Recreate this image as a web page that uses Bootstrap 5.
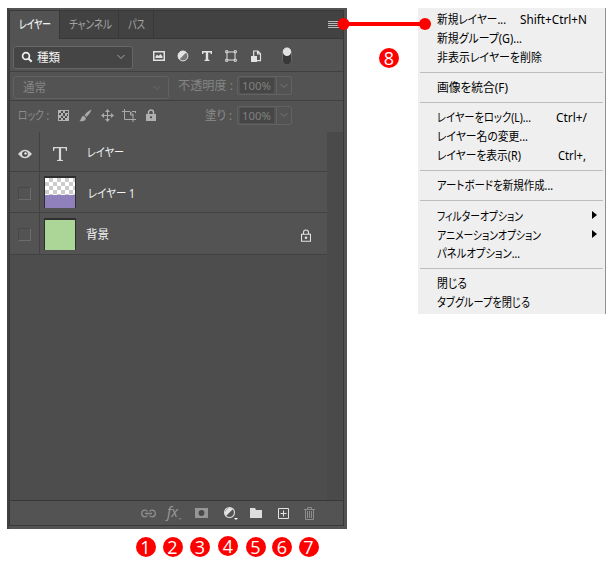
<!DOCTYPE html>
<html lang="ja">
<head>
<meta charset="utf-8">
<title>レイヤーパネル</title>
<link rel="stylesheet" href="https://cdn.jsdelivr.net/npm/bootstrap@5.3.0/dist/css/bootstrap.min.css">
<style>
body{width:613px;height:567px;overflow:hidden;background:#fff;font-family:"Noto Sans","Noto Sans CJK JP",sans-serif;font-size:12px;line-height:18px}
.t{display:inline-block;white-space:nowrap;font-feature-settings:"palt";transform-origin:0 50%;flex:none}
svg{display:block;flex:none}
.stage{padding:8px 7px 0}
.panel{width:340px;height:521px;background:#535353;border-left:2px solid #404040;padding:2px 3px 3px 0}
.inner{height:516px;border:1px solid #383838}
.tabs{height:28px;background:#424242;border-bottom:1px solid #383838;color:#a2a2a2}
.tabx{border-right:1px solid #383838;height:27px;padding-left:9px}
.tabx.on{background:#535353;color:#f0f0f0;height:28px;width:50px;font-weight:500}
.tw2{width:59px}.tw3{width:35px}
.bar1{height:33px;border-bottom:1px solid #404040;padding-left:3px}
.bar2{height:29px;border-bottom:1px solid #404040;padding-left:3px;padding-bottom:1px;color:#858585}
.bar3{height:31px;padding-left:8px;padding-bottom:3px;color:#8c8c8c}
.pick{height:23px;border:1px solid #666;border-radius:3px;padding:0 7px}
.kind{width:120px;background:#454545;color:#f4f4f4;margin-top:4px}
.kind .t{margin-top:2px}
.blend{width:156px;border-color:#616161;padding-left:9px}
.num{width:55px;height:19px;border:1px solid #626262;border-radius:2px;color:#808080}
.num .val{width:34px;height:15px;margin-left:2px;background:#464646;padding-left:2px;font-size:11px;line-height:15px}
.num .arr{width:15px;border-left:1px solid #626262;margin-left:auto}
.cell24{width:24px}.cell22{width:22px}
.filters{margin:2px 0 0 14px}
.toggle{margin-left:15px}
.lab2{width:59px;margin-left:9px}
.lab3{width:32px;margin-left:43px}
.lab3 .t,.lock-label{margin-top:1px}
.locks{margin-left:3px}
.list{height:368px;background:#4d4d4d}
.rows{width:317px}
.layer{background:#535353;border-bottom:1px solid #424242;height:41px;color:#f4f4f4}
.layer.h1x{height:40px}.layer.h3x{height:42px}
.vis{width:30px;border-right:1px solid #424242}
.eyebox{width:13px;height:13px;margin-top:2px;border:1px solid #484848;border-right-color:#6c6c6c;border-bottom-color:#6c6c6c}
.thumb{width:32px;height:32px;border:1px solid #2f2f2f;border-top-width:2px;border-bottom:0;margin-left:4px}
.glyph{margin:4px 0 0 13px}
.name1{margin:3px 0 0 20px}.name2{margin:4px 0 0 12px}.name3{margin:2px 0 0 10px}
.green{background:#acd598}
.purple{background:#9081bc}
.check{height:17px;background:repeating-conic-gradient(#ccc 0 25%,#fff 0 50%) 0 0/8px 8px}
.scroll{width:15px;background:#4a4a4a}
.foot{height:25px;border-top:1px solid #383838;display:grid;grid-template-columns:repeat(7,27px);padding-left:124px}
.nudge{transform:translateX(1px)}
.fx{width:15px;height:18px;font-style:italic;font-size:14px;line-height:16px;color:#999}
.nums{display:grid;grid-template-columns:27px 27px 28px 28px 27px 26px 27px;padding-left:125px;margin-top:8px;width:340px}
.dot{width:20px;height:20px;border-radius:50%;background:#f00;color:#fff;font:18px/20px "Open Sans","Noto Sans",sans-serif;text-align:center}
.up{margin-top:-1px}
.menu{width:188px;height:306px;margin-left:71px;background:#efefef;border-right:1px solid #909090;color:#000;padding-top:3px}
.mi{height:19px;line-height:17px;padding-left:19px}
.sep{height:11px;padding:4px 2px 0}
.sep::before{content:"";display:block;height:1px;background:#bdbdbd}
.key1{width:85px}.key2{width:49px}.key3{width:47px}
.arrow{border:4px solid transparent;border-left:5px solid #000;border-right:0;margin:0 8px 3px 0}
.callout{left:337px;top:18px}
.eight{left:379px;top:48px}
</style>
<script src="https://cdn.jsdelivr.net/npm/bootstrap@5.3.0/dist/js/bootstrap.bundle.min.js"></script>
</head>
<body>
<main class="stage position-relative">
<div class="d-flex align-items-start">
<section class="panel">
 <div class="inner d-flex flex-column">
  <div class="tabs d-flex flex-shrink-0">
   <div class="tabx on d-flex align-items-center"><span class="t" data-w="32">レイヤー</span></div>
   <div class="tabx tw2 d-flex align-items-center"><span class="t" data-w="43">チャンネル</span></div>
   <div class="tabx tw3 d-flex align-items-center"><span class="t" data-w="17">パス</span></div>
   <svg class="ms-auto mt-2 me-1" width="11" height="12"><path d="M0 2.5h11M0 4.5h11M0 6.5h11M0 8.5h11" stroke="#bbb"/></svg>
  </div>
  <div class="bar1 d-flex align-items-center flex-shrink-0">
   <div class="pick kind d-flex align-items-center">
    <svg width="12" height="12" fill="none" stroke="#f0f0f0"><circle cx="5" cy="5" r="3.4" stroke-width="1.7"/><path d="M7.5 7.5l3.2 3.2" stroke-width="2"/></svg>
    <span class="t ms-1" data-w="23">種類</span>
    <svg class="ms-auto" width="8" height="6" fill="none" stroke="#aaa"><path d="M.5 1L4 4.500 7.500 1"/></svg>
   </div>
   <div class="filters d-flex align-items-center">
    <div class="cell24 d-flex justify-content-center"><svg width="12" height="12"><path d="M.75 1.75h10.5v8.5H.75z" fill="none" stroke="#e2e2e2" stroke-width="1.5"/><path d="M2.5 8V6.5L4 4.5l1.5 1.6L7.5 4l2 2.5V8z" fill="#e2e2e2"/></svg></div>
    <div class="cell24 d-flex justify-content-center"><svg width="12" height="12"><circle cx="6" cy="6" r="4.9" fill="#777" stroke="#e2e2e2" stroke-width="1"/><path d="M2.3 9.4A5 5 0 0 1 9.4 2.3z" fill="#e2e2e2"/></svg></div>
    <div class="cell24 d-flex justify-content-center"><svg width="12" height="12"><path d="M1 1h10v3H9.8L9.3 2.6H7.2v7l1.3.4v1h-5v-1l1.3-.4v-7H2.7L2.2 4H1z" fill="#e2e2e2"/></svg></div>
    <div class="cell24 d-flex justify-content-center"><svg width="12" height="12" fill="none" stroke="#e2e2e2"><path d="M2 2h8v8H2z"/><path d="M.7.7h2v2h-2zM9.3.7h2v2h-2zM.7 9.3h2v2h-2zM9.3 9.3h2v2h-2z" fill="#535353"/></svg></div>
    <div class="cell24 d-flex justify-content-center"><svg class="nudge" width="12" height="13"><path d="M3.7 6V1h4.2l2.6 2.7v7H7M7.5 1v3h3" fill="none" stroke="#e2e2e2" stroke-width="1.2"/><path d="M1 6h6v6H1z" fill="#e2e2e2"/></svg></div>
    <svg class="toggle" width="10" height="19"><rect width="10" height="18.5" rx="5" fill="#383838"/><rect x=".5" y=".5" width="9" height="17.5" rx="4.5" fill="none" stroke="#686868"/><circle cx="5" cy="4.8" r="4.2" fill="#e0e0e0"/></svg>
   </div>
  </div>
  <div class="bar2 d-flex align-items-center flex-shrink-0">
   <div class="pick blend d-flex align-items-center mt-1"><span class="t" data-w="23">通常</span><svg class="ms-auto" width="8" height="6" fill="none" stroke="#6b6b6b"><path d="M.5 1L4 4.500 7.500 1"/></svg></div>
   <div class="lab2"><span class="t" data-w="55">不透明度 :</span></div>
   <div class="num d-flex align-items-center"><div class="val"><span class="t" data-w="29">100%</span></div><div class="arr h-100 d-flex align-items-center justify-content-center"><svg width="8" height="6" fill="none" stroke="#747474"><path d="M.5 1L4 4.500 7.500 1"/></svg></div></div>
  </div>
  <div class="bar3 d-flex align-items-center flex-shrink-0">
   <span class="t lock-label" data-w="31">ロック :</span>
   <div class="locks d-flex align-items-center">
    <div class="cell22 d-flex justify-content-center"><svg width="11" height="11"><path d="M0 0h11v11H0z" fill="#b4b4b4"/><path d="M3 1h2v2H3zM7 1h3v2H7zM1 3h2v2H1zM5 3h2v3H5zM3 6h2v2H3zM7 6h2v2H7zM1 8h2v2H1zM5 8h2v2H5zM9 4h1v2H9z" fill="#4c4c4c"/></svg></div>
    <div class="cell22 d-flex justify-content-center"><svg width="13" height="13" fill="#aaa"><path d="M12.700.3Q9 2 5.500 6l2 2Q11.500 4.500 12.700.3zM4.800 6.700l2.100 2.200C6.500 12 3.500 12.500.2 12.200 2.500 11 1.800 7 4.800 6.700z"/></svg></div>
    <div class="cell22 d-flex justify-content-center"><svg width="13" height="13" fill="#aaa"><path d="M6 2h1v9H6zM2 6h9v1H2zM6.500 0L9 3H4zM6.500 13L4 10h5zM0 6.500L3 4v5zM13 6.500L10 9V4z"/></svg></div>
    <div class="cell22 d-flex justify-content-center"><svg width="14" height="13" fill="none" stroke="#aaa"><path d="M2.500 0v3M0 2.500h8l3 3V13M2.500 3v7.500H14M8.500 3v3h3M10 2.500h3.500M13.500 2v2"/></svg></div>
    <div class="cell22 d-flex justify-content-center"><svg width="10" height="12"><path d="M2.500 5V3.500a2.500 2.500 0 0 1 5 0V5" fill="none" stroke="#b0b0b0" stroke-width="1.500"/><path d="M0 5h10v7H0z" fill="#b0b0b0"/><circle cx="5" cy="8.300" r="1.100" fill="#444"/></svg></div>
   </div>
   <div class="lab3"><span class="t" data-w="27">塗り :</span></div>
   <div class="num d-flex align-items-center"><div class="val"><span class="t" data-w="29">100%</span></div><div class="arr h-100 d-flex align-items-center justify-content-center"><svg width="8" height="6" fill="none" stroke="#747474"><path d="M.5 1L4 4.500 7.500 1"/></svg></div></div>
  </div>
  <div class="list d-flex flex-grow-1">
   <div class="rows">
    <div class="layer h1x d-flex align-items-center">
     <div class="vis h-100 d-flex align-items-center justify-content-center pt-1"><svg width="14" height="10"><path d="M0 5Q7-3.500 14 5 7 13.500 0 5z" fill="#d8d8d8"/><circle cx="7" cy="5" r="2.800" fill="#454545"/><circle cx="7.500" cy="4.500" r="1.200" fill="#eee"/></svg></div>
     <svg class="glyph" width="14" height="16"><path d="M0 1h14v4h-1l-.6-2.700H8.100v11.400l2 .5v.8H3.900v-.8l2-.5V2.300H1.600L1 5H0z" fill="#d8d8d8"/></svg>
     <span class="t name1" data-w="37">レイヤー</span>
    </div>
    <div class="layer d-flex align-items-center">
     <div class="vis h-100 d-flex align-items-center justify-content-center"><div class="eyebox"></div></div>
     <div class="thumb purple"><div class="check"></div></div>
     <span class="t name2" data-w="47">レイヤー 1</span>
    </div>
    <div class="layer h3x d-flex align-items-center">
     <div class="vis h-100 d-flex align-items-center justify-content-center"><div class="eyebox"></div></div>
     <div class="thumb green"></div>
     <span class="t name3" data-w="23">背景</span>
     <svg class="ms-auto me-3 mt-1" width="10" height="13"><path d="M2.500 5V3.500a2.500 2.500 0 0 1 5 0V5M.5 5.200h9v7h-9z" fill="none" stroke="#e4e4e4" stroke-width="1.100"/><circle cx="5" cy="8.800" r="1.300" fill="#e4e4e4"/></svg>
    </div>
   </div>
   <div class="scroll"></div>
  </div>
  <div class="foot flex-shrink-0 align-items-center">
   <svg class="mx-auto nudge" width="15" height="9" fill="none" stroke="#8e8e8e" stroke-width="1.300"><path d="M6.500 2.500A3 3 0 0 0 4 1.200a3.300 3.300 0 0 0 0 6.600 3 3 0 0 0 2.500-1.300M8.500 2.500A3 3 0 0 1 11 1.200a3.300 3.300 0 0 1 0 6.600 3 3 0 0 1-2.500-1.300M4 4.500h7"/></svg>
   <div class="mx-auto fx d-flex align-items-end"><span class="t align-self-start" data-w="11">fx</span><svg width="4" height="4"><path d="M0 0h4L2 2z" fill="#777"/></svg></div>
   <svg class="mx-auto" width="13" height="10"><path d="M0 0h13v10H0z" fill="#969696"/><circle cx="6.500" cy="5" r="2.900" fill="#4a4a4a"/></svg>
   <svg class="mx-auto nudge" width="16" height="16"><circle cx="7.500" cy="7.500" r="5" fill="#555" stroke="#ddd" stroke-width="1.100"/><path d="M4 11A5 5 0 0 1 11 4z" fill="#e2e2e2"/><path d="M12 13h4l-2 2z" fill="#fff"/></svg>
   <svg class="mx-auto" width="12" height="10"><path d="M0 0h5l1 2h6v8H0z" fill="#dedede"/></svg>
   <svg class="mx-auto nudge" width="11" height="11" fill="none" stroke="#e2e2e2"><path d="M.5.5h10v10H.5zM5.500 2.500v6M2.500 5.500h6"/></svg>
   <svg class="mx-auto" width="11" height="13" fill="none" stroke="#8d8d8d"><path d="M0 2.500h11M3.500 2V.5h4V2M1.500 3v9.500h8V3M3.500 4v7M5.500 4v7M7.500 4v7"/></svg>
  </div>
 </div>
</section>
<section class="menu">
 <div class="mi d-flex"><span class="t" data-w="69">新規レイヤー...</span><span class="ms-auto key1"><span class="t" data-w="67">Shift+Ctrl+N</span></span></div>
 <div class="mi"><span class="t" data-w="85">新規グループ(G)...</span></div>
 <div class="mi"><span class="t" data-w="105">非表示レイヤーを削除</span></div>
 <div class="sep"></div>
 <div class="mi"><span class="t" data-w="71">画像を統合(F)</span></div>
 <div class="sep"></div>
 <div class="mi d-flex"><span class="t" data-w="94">レイヤーをロック(L)...</span><span class="ms-auto key2"><span class="t" data-w="31">Ctrl+/</span></span></div>
 <div class="mi"><span class="t" data-w="91">レイヤー名の変更...</span></div>
 <div class="mi d-flex"><span class="t" data-w="84">レイヤーを表示(R)</span><span class="ms-auto key3"><span class="t" data-w="28">Ctrl+,</span></span></div>
 <div class="sep"></div>
 <div class="mi"><span class="t" data-w="116">アートボードを新規作成...</span></div>
 <div class="sep"></div>
 <div class="mi d-flex align-items-center"><span class="t" data-w="86">フィルターオプション</span><i class="arrow ms-auto"></i></div>
 <div class="mi d-flex align-items-center"><span class="t" data-w="104">アニメーションオプション</span><i class="arrow ms-auto"></i></div>
 <div class="mi"><span class="t" data-w="83">パネルオプション...</span></div>
 <div class="sep"></div>
 <div class="mi"><span class="t" data-w="30">閉じる</span></div>
 <div class="mi"><span class="t" data-w="93">タブグループを閉じる</span></div>
</section>
</div>
<div class="nums">
 <div class="dot mx-auto">1</div><div class="dot mx-auto">2</div><div class="dot mx-auto">3</div><div class="dot mx-auto up">4</div><div class="dot mx-auto">5</div><div class="dot mx-auto">6</div><div class="dot mx-auto">7</div>
</div>
<svg class="callout position-absolute" width="95" height="12"><path d="M6 6h82" stroke="#f00" stroke-width="4"/><circle cx="6.500" cy="6" r="6" fill="#f00"/><circle cx="88" cy="6" r="6" fill="#f00"/></svg>
<div class="dot eight position-absolute">8</div>
</main>
<script>
// Condense each label to its column width.
document.querySelectorAll('.t[data-w]').forEach(function(e){
  var n=e.getBoundingClientRect().width,w=+e.dataset.w;
  e.style.transform='scaleX('+(w/n)+')';
  e.style.marginRight=(w-n)+'px';
});
</script>
</body>
</html>
